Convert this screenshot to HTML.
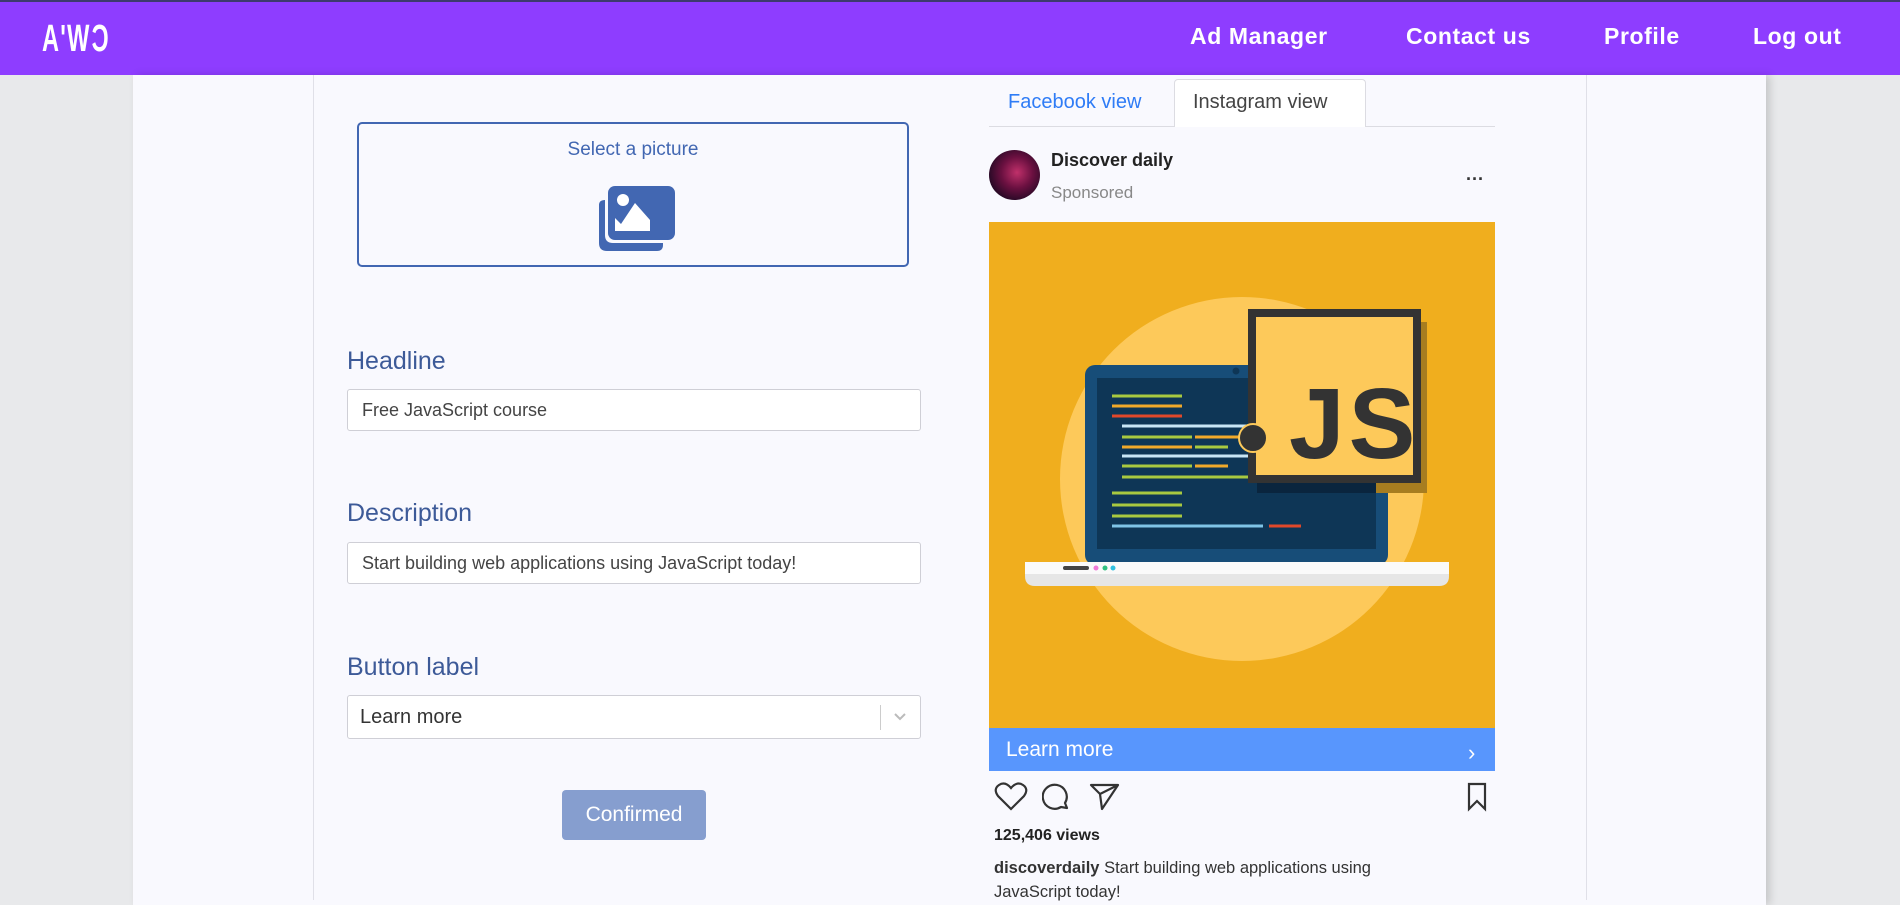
<!DOCTYPE html>
<html><head><meta charset="utf-8"><style>
*{margin:0;padding:0;box-sizing:border-box}
body{width:1900px;height:900px;overflow:hidden;background:#e8e9eb;font-family:"Liberation Sans",sans-serif;position:relative}
.a{position:absolute}
.nav{left:0;top:0;width:1900px;height:75px;background:#8e3dff;border-top:2px solid #3d3a6e}
.nl{color:#fff;font-size:23px;font-weight:bold;top:23px;letter-spacing:0.6px}
.panel{left:133px;top:75px;width:1633px;height:830px;background:#f9f9fe;box-shadow:4px 0 8px rgba(0,0,0,0.15)}
.vl{top:75px;width:1px;height:825px;background:#e0e0e8}
.lbl{color:#3d5a98;font-size:25px;left:347px}
.inp{left:347px;width:574px;height:42px;background:#fff;border:1px solid #cfcfd6;border-radius:3px;font-size:18px;color:#444;padding:10px 14px}
</style></head><body>
<div class="a nav"></div>
<div class="a" style="left:42px;top:18px;color:#fff;font-size:38px;font-weight:bold;transform:scaleX(0.62);transform-origin:left;letter-spacing:2px;font-family:'Liberation Sans Narrow','Liberation Sans',sans-serif">A'W<span style="display:inline-block;transform:scaleX(-1)">C</span></div>
<div class="a nl" style="left:1190px">Ad Manager</div>
<div class="a nl" style="left:1406px">Contact us</div>
<div class="a nl" style="left:1604px">Profile</div>
<div class="a nl" style="left:1753px">Log out</div>

<div class="a panel"></div>
<div class="a vl" style="left:313px"></div>
<div class="a vl" style="left:1586px"></div>

<div class="a" style="left:357px;top:122px;width:552px;height:145px;border:2px solid #4267b2;border-radius:5px"></div>
<div class="a" style="left:357px;top:139px;width:552px;text-align:center;color:#4267b2;font-size:19px">Select a picture</div>
<svg class="a" style="left:593px;top:185px" width="83" height="67" viewBox="0 0 83 67">
<path d="M6 20 V58 Q6 66 14 66 H64 Q70 66 70 60 V58 H20 Q12 58 12 50 V15 Q6 15 6 20Z" fill="#4267b2"/>
<rect x="15" y="1" width="67" height="54" rx="7" fill="#4267b2"/>
<circle cx="30" cy="15" r="6" fill="#fff"/>
<path d="M22 46 V33 L28 39 L42 18 L57 35 V46Z" fill="#fff"/>
</svg>

<div class="a lbl" style="top:347px">Headline</div>
<div class="a inp" style="top:389px">Free JavaScript course</div>
<div class="a lbl" style="top:499px">Description</div>
<div class="a inp" style="top:542px">Start building web applications using JavaScript today!</div>
<div class="a lbl" style="top:653px">Button label</div>
<div class="a inp" style="top:695px;height:44px;font-size:20px;color:#333;padding:10px 12px">Learn more</div>
<div class="a" style="left:880px;top:705px;width:1px;height:25px;background:#ccc"></div>
<svg class="a" style="left:893px;top:712px" width="14" height="10"><path d="M2 2 L7 7 L12 2" stroke="#bbb" stroke-width="2" fill="none"/></svg>
<div class="a" style="left:562px;top:790px;width:144px;height:50px;background:#869ecf;border-radius:4px;color:#fff;font-size:21px;text-align:center;line-height:50px">Confirmed</div>

<div class="a" style="left:989px;top:126px;width:506px;height:1px;background:#dcdce2"></div>
<div class="a" style="left:1008px;top:91px;color:#2f7cf6;font-size:20px">Facebook view</div>
<div class="a" style="left:1174px;top:79px;width:192px;height:48px;background:#fff;border:1px solid #dcdce2;border-bottom:none;border-radius:4px 4px 0 0"></div>
<div class="a" style="left:1193px;top:91px;color:#444;font-size:20px">Instagram view</div>

<div class="a" style="left:989px;top:150px;width:51px;height:50px;border-radius:50%;background:radial-gradient(circle at 55% 45%,#c0306a 0,#6a1040 40%,#1a0820 80%)"></div>
<div class="a" style="left:1051px;top:150px;color:#222;font-size:18px;font-weight:bold">Discover daily</div>
<div class="a" style="left:1051px;top:183px;color:#888;font-size:17px">Sponsored</div>
<div class="a" style="left:1466px;top:169px;color:#333;font-size:18px;font-weight:bold">···</div>

<svg class="a" style="left:989px;top:222px" width="506" height="506" viewBox="0 0 506 506">
<rect width="506" height="506" fill="#f0ae1e"/>
<circle cx="253" cy="257" r="182" fill="#fdc95a"/>
<rect x="96" y="143" width="303" height="200" rx="10" fill="#174d78"/>
<rect x="108" y="156" width="279" height="171" fill="#0e3656"/>
<circle cx="247" cy="149" r="3.5" fill="#0e3656"/>
<g stroke-width="3">
<line x1="123" y1="174" x2="193" y2="174" stroke="#a8c940"/>
<line x1="123" y1="184" x2="193" y2="184" stroke="#f0a92a"/>
<line x1="123" y1="194" x2="193" y2="194" stroke="#e0482a"/>
<line x1="133" y1="204" x2="259" y2="204" stroke="#c8e6f5"/>
<line x1="133" y1="215" x2="203" y2="215" stroke="#a8c940"/><line x1="206" y1="215" x2="250" y2="215" stroke="#f0a92a"/>
<line x1="133" y1="225" x2="203" y2="225" stroke="#f0a92a"/><line x1="206" y1="225" x2="239" y2="225" stroke="#a8c940"/>
<line x1="133" y1="234" x2="259" y2="234" stroke="#c8e6f5"/>
<line x1="133" y1="244" x2="203" y2="244" stroke="#a8c940"/><line x1="206" y1="244" x2="239" y2="244" stroke="#f0a92a"/>
<line x1="133" y1="255" x2="259" y2="255" stroke="#a8c940"/>
<line x1="123" y1="271" x2="193" y2="271" stroke="#a8c940"/>
<line x1="123" y1="283" x2="193" y2="283" stroke="#a8c940"/>
<line x1="123" y1="294" x2="193" y2="294" stroke="#a8c940"/>
<line x1="123" y1="304" x2="274" y2="304" stroke="#7fc4e6"/><line x1="280" y1="304" x2="312" y2="304" stroke="#e0482a"/>
</g>
<rect x="268" y="257" width="119" height="14" fill="#0a2238" opacity="0.8"/>
<rect x="428" y="100" width="10" height="171" fill="#a77d20"/>
<rect x="387" y="257" width="51" height="14" fill="#a77d20"/>
<rect x="263" y="91" width="165" height="166" fill="#fdc95a" stroke="#333" stroke-width="8"/>
<text x="300" y="236" font-family="Liberation Sans" font-weight="bold" font-size="100" letter-spacing="4" fill="#333">JS</text>
<circle cx="264" cy="216" r="14" fill="#333" stroke="#fdc95a" stroke-width="2"/>
<path d="M36 340 H460 V354 Q460 364 450 364 H46 Q36 364 36 354Z" fill="#e6e6e6"/>
<rect x="36" y="340" width="424" height="12" fill="#fafafa"/>
<rect x="74" y="344" width="26" height="4" rx="2" fill="#444"/>
<circle cx="107" cy="346" r="2.5" fill="#f07ad8"/><circle cx="116" cy="346" r="2.5" fill="#30c080"/><circle cx="124" cy="346" r="2.5" fill="#30c0e0"/>
</svg>
<div class="a" style="left:989px;top:728px;width:506px;height:43px;background:#5896fd"></div>
<div class="a" style="left:1006px;top:738px;color:#fff;font-size:21px">Learn more</div>
<div class="a" style="left:1468px;top:740px;color:#fff;font-size:22px">›</div>

<svg class="a" style="left:994px;top:782px" width="34" height="30" viewBox="0 0 34 30"><path d="M17 27 L4 14 Q-1 7 5 3 Q11 -1 17 6 Q23 -1 29 3 Q35 7 30 14Z" fill="none" stroke="#333" stroke-width="2.2"/></svg>
<svg class="a" style="left:1042px;top:782px" width="30" height="30" viewBox="0 0 30 30"><path d="M25 26 L23 21 A12 12 0 1 0 19 25 Z" fill="none" stroke="#333" stroke-width="2.2" stroke-linejoin="round"/></svg>
<svg class="a" style="left:1089px;top:782px" width="32" height="30" viewBox="0 0 32 30"><path d="M2 3 H29 L13 27 L11 12 Z M11 12 L29 3" fill="none" stroke="#333" stroke-width="2.2" stroke-linejoin="round"/></svg>
<svg class="a" style="left:1466px;top:782px" width="22" height="30" viewBox="0 0 22 30"><path d="M3 2 H19 V27 L11 19 L3 27 Z" fill="none" stroke="#333" stroke-width="2.2"/></svg>

<div class="a" style="left:994px;top:827px;color:#222;font-size:16px;font-weight:bold">125,406 views</div>
<div class="a" style="left:994px;top:856px;width:430px;color:#333;font-size:16.5px;line-height:24px"><b>discoverdaily</b> Start building web applications using JavaScript today!</div>
</body></html>
